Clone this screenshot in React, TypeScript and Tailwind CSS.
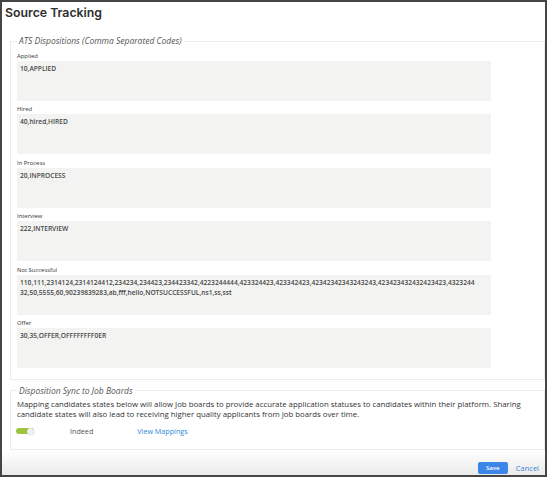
import React from "react";

const fields: { label: string; lines: string[] }[] = [
  { label: "Applied", lines: ["10,APPLIED"] },
  { label: "Hired", lines: ["40,hired,HIRED"] },
  { label: "In Process", lines: ["20,INPROCESS"] },
  { label: "Interview", lines: ["222,INTERVIEW"] },
  {
    label: "Not Successful",
    lines: [
      "110,111,2314124,2314124412,234234,234423,234423342,4223244444,423324423,423342423,42342342343243243,423423432432423423,4323244",
      "32,50,5555,60,90239839283,ab,fff,hello,NOTSUCCESSFUL,ns1,ss,sst",
    ],
  },
  { label: "Offer", lines: ["30,35,OFFER,OFFFFFFFF0ER"] },
];

export default function App() {
  return (
    <div className="w-[548px] h-[478px] bg-white font-['Open_Sans',sans-serif]">
      <div className="w-[547px] h-[477px] border-2 border-[#454545] bg-white flex flex-col overflow-hidden">
        {/* Header */}
        <div className="h-[33px] pl-[3px] pt-[3.3px] shrink-0">
          <h1 className="font-['Inter',sans-serif] font-semibold text-[12.3px] leading-[16px] text-[#2e2e2e]">
            Source Tracking
          </h1>
        </div>

        {/* Body */}
        <div className="pl-[8px] shrink-0">
          <fieldset className="border border-[#ececec] pl-[6px] pr-[6px] pt-[5px] pb-[11px]">
            <legend className="px-[2px] italic text-[8.5px] leading-[12px] text-[#555]">
              ATS Dispositions (Comma Separated Codes)
            </legend>
            <div className="flex flex-col gap-[4.4px] w-[474px]">
              {fields.map((f) => (
                <div key={f.label} className="flex flex-col">
                  <div className="text-[5.9px] leading-[9px] font-medium text-[#333]">{f.label}</div>
                  <div className="h-[40px] bg-[#f3f3f2] pl-[3px] pt-[3px] text-[6.65px] leading-[10px] font-semibold text-[#474747] whitespace-nowrap overflow-hidden">
                    {f.lines.map((l, i) => (
                      <div key={i}>{l}</div>
                    ))}
                  </div>
                </div>
              ))}
            </div>
          </fieldset>

          <fieldset className="mt-[5px] border border-[#ececec] pl-[6px] pr-[6px] pt-[2px] pb-[12px]">
            <legend className="px-[2px] italic text-[8.5px] leading-[12px] text-[#555]">
              Disposition Sync to Job Boards
            </legend>
            <p className="text-[7.8px] leading-[10px] text-[#333] whitespace-nowrap">
              Mapping candidates states below will allow Job boards to provide accurate application statuses to candidates within their platform. Sharing
              <br />
              candidate states will also lead to receiving higher quality applicants from Job boards over time.
            </p>
            <div className="mt-[7px] h-[11px] flex items-center">
              <div className="w-[18px] h-[6px] rounded-full bg-[#9cc43f] relative ml-[-1px]">
                <div className="absolute right-[0px] top-[-0.5px] w-[7px] h-[7px] rounded-full bg-[#f1f1f1] shadow-[0_0_1px_rgba(0,0,0,0.3)]" />
              </div>
              <span className="ml-[36px] text-[7.2px] text-[#555]">Indeed</span>
              <span className="ml-[44px] text-[7.2px] text-[#2d8bd8]">View Mappings</span>
            </div>
          </fieldset>
        </div>

        {/* Footer */}
        <div className="flex-1 bg-linear-to-b from-white to-[#ebebeb] flex items-end justify-end pr-[6px] pb-[1px]">
          <button className="w-[30px] h-[12px] rounded-[2px] bg-[#3c86e8] text-white text-[6px] font-semibold leading-[12px]">
            Save
          </button>
          <span className="ml-[8px] mb-[1px] text-[7.5px] leading-[10px] text-[#3a86d6]">Cancel</span>
        </div>
      </div>
    </div>
  );
}
